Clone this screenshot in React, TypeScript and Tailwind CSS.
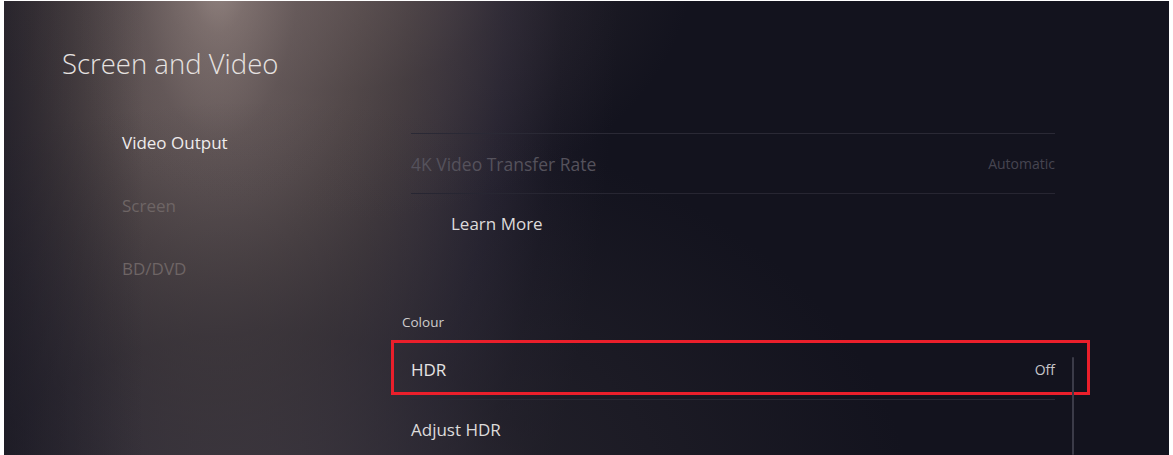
import React from 'react'

const navItems = [
    { label: "Video Output", active: true },
    { label: "Screen", active: false },
    { label: "BD/DVD", active: false },
];

const App = () => {
    return (
        <div className="w-[1173px] h-[455px] bg-white pl-[4px] pr-[4px] pt-[1px] font-['Open_Sans',sans-serif]">
            <div className="relative h-[454px] overflow-hidden flex bg-[#13131e] bg-[linear-gradient(to_right,rgba(22,21,30,0.5)_0px,rgba(22,21,30,0)_140px),radial-gradient(ellipse_360px_260px_at_330px_-40px,rgba(110,96,96,0.45)_0%,rgba(80,70,72,0.25)_50%,rgba(19,19,30,0)_100%),radial-gradient(ellipse_650px_420px_at_260px_520px,rgba(62,57,64,0.75)_0%,rgba(45,42,50,0.5)_45%,rgba(19,19,30,0)_100%),radial-gradient(ellipse_400px_900px_at_215px_-40px,#b4a49e_0%,#8a7b78_8%,#675b5b_20%,#524849_36%,#433b3f_48%,#37313a_58%,#252230_72%,#181723_86%,#13131e_100%)]">
                {/* left column */}
                <div className="w-[387px] shrink-0">
                    <h1 className="pl-[58px] pt-[45px] text-[27.5px] leading-[36px] font-light text-[#e6e2e0]">Screen and Video</h1>
                    <nav className="pl-[118px] pt-[49px] flex flex-col gap-[39px]">
                        {navItems.map((item) => (
                            <div key={item.label}
                                className={item.active ? "text-[17px] leading-[24px] text-[#eeecec]" : "text-[17px] leading-[24px] text-[#6e6565]"}>
                                {item.label}
                            </div>
                        ))}
                    </nav>
                </div>

                {/* right column */}
                <div className="w-[699px] shrink-0 pt-[132px]">
                    <div className="ml-[20px] w-[644px] h-[60px] border-t border-[#2a2935] flex items-center justify-between">
                        <span className="text-[17.5px] leading-[24px] text-[#55525c]">4K Video Transfer Rate</span>
                        <span className="text-[14px] leading-[20px] text-[#464551]">Automatic</span>
                    </div>
                    <div className="ml-[20px] w-[644px] h-[60px] border-t border-[#272632] flex items-center pl-[40px]">
                        <span className="text-[17px] leading-[24px] text-[#dddbdb]">Learn More</span>
                    </div>
                    <div className="pl-[11px] pt-[59px] pb-[8px] text-[13.5px] leading-[20px] text-[#cfcdcd]">Colour</div>
                    <div className="h-[55px] border-[3px] border-[#ea1f2b] flex items-center justify-between pl-[17px] pr-[32px] pt-[5px]">
                        <span className="text-[17px] leading-[24px] text-[#e6e4e4]">HDR</span>
                        <span className="text-[14px] leading-[20px] text-[#c8c6ca]">Off</span>
                    </div>
                    <div className="mt-[4px] ml-[20px] w-[644px] h-[60px] border-t border-[#2a2935] flex items-center">
                        <span className="text-[17px] leading-[24px] text-[#dddbdb]">Adjust HDR</span>
                    </div>
                </div>

                {/* scrollbar */}
                <div className="absolute left-[1068px] top-[356px] bottom-0 w-[2px] rounded-full bg-[#3b3b48]"></div>
            </div>
        </div>
    )
}

export default App
